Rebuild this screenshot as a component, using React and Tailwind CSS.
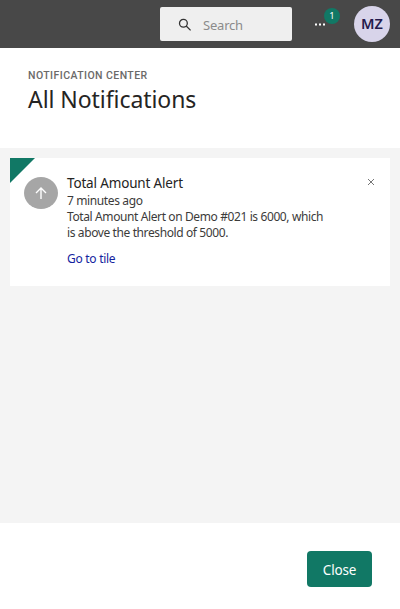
function TopBar() {
  return (
    <header className="flex h-12 shrink-0 items-start bg-[#484848] pl-40">
      <div className="mt-[7px] flex h-[34px] w-[132px] items-center rounded-[2px] bg-[#efefef]">
        <svg className="ml-[18px] mt-px h-[14px] w-[14px]" viewBox="0 0 14 14" fill="none" stroke="#333" strokeWidth="1.3">
          <circle cx="5.4" cy="5.2" r="3.9" />
          <path d="M8.2 8L12.6 12.4" />
        </svg>
        <span className="ml-[11px] mt-px text-[13px] leading-5 tracking-[-0.2px] text-[#8b8b8b]">Search</span>
      </div>
      <div className="relative ml-[22px] flex h-12 w-7 items-center">
        <svg className="h-[3px] w-3" viewBox="0 0 12 3" fill="#fff">
          <path d="M1 .5h2v2H1zM5 .5h2v2H5zM9 .5h2v2H9z" />
        </svg>
        <span className="absolute left-[10px] top-2 flex h-4 w-4 items-center justify-center rounded-full bg-[#117865] text-[9.5px] leading-none text-white">1</span>
      </div>
      <div className="ml-3 mt-[6px] flex h-9 w-9 items-center justify-center rounded-full bg-[#d8d4ea] text-[14.5px] font-semibold text-[#241a4c]">
        MZ
      </div>
    </header>
  );
}

function NotificationCard() {
  return (
    <article className="relative flex h-32 bg-white pl-[14px]">
      <svg className="absolute left-0 top-0 h-[25px] w-[25px]" viewBox="0 0 25 25">
        <path d="M0 0H25L0 25Z" fill="#117865" />
      </svg>
      <div className="mt-[19px] flex h-8 w-[34px] shrink-0 items-center justify-center rounded-[50%] bg-[#a6a6a6]">
        <svg className="h-3 w-3" viewBox="0 0 12 12" fill="none" stroke="#fff" strokeWidth="1.4">
          <path d="M6 12V1M1 6L6 1L11 6" />
        </svg>
      </div>
      <div className="ml-[9px] pt-[15px] text-[12px] leading-4 text-[#3c3b3a]">
        <h2 className="whitespace-nowrap text-[13.5px] leading-5 tracking-[-0.16px] text-[#252423]">Total Amount Alert</h2>
        <p className="whitespace-nowrap tracking-[-0.38px]">7 minutes ago</p>
        <p className="whitespace-nowrap tracking-[-0.39px]">
          Total Amount Alert on Demo #021 is 6000, which
          <br />
          is above the threshold of 5000.
        </p>
        <a className="mt-[10px] block tracking-[-0.28px] text-[#12239e]">Go to tile</a>
      </div>
      <svg className="absolute right-4 top-[21px] h-[6px] w-[6px]" viewBox="0 0 6 6" fill="none" stroke="#666" strokeWidth="0.9">
        <path d="M0 0L6 6M6 0L0 6" />
      </svg>
    </article>
  );
}

export default function App() {
  return (
    <div className="flex h-[609px] w-[400px] flex-col overflow-hidden bg-white font-['Noto_Sans','Open_Sans',sans-serif]">
      <TopBar />
      <section className="h-[100px] shrink-0 pl-7 pt-5">
        <div className="font-[Roboto,sans-serif] text-[10.5px] font-medium leading-4 tracking-[0.43px] text-[#6b6a69]">
          NOTIFICATION CENTER
        </div>
        <h1 className="text-[23px] leading-[31px] tracking-[-0.06px] text-[#252423]">All Notifications</h1>
      </section>
      <main className="h-[375px] shrink-0 bg-[#f4f4f4] p-[10px]">
        <NotificationCard />
      </main>
      <footer className="flex justify-end pr-7 pt-7">
        <button className="flex h-9 w-[65px] items-center justify-center rounded-[4px] bg-[#117865] pt-[2px] text-[13.5px] tracking-[-0.2px] text-white">
          Close
        </button>
      </footer>
    </div>
  );
}
